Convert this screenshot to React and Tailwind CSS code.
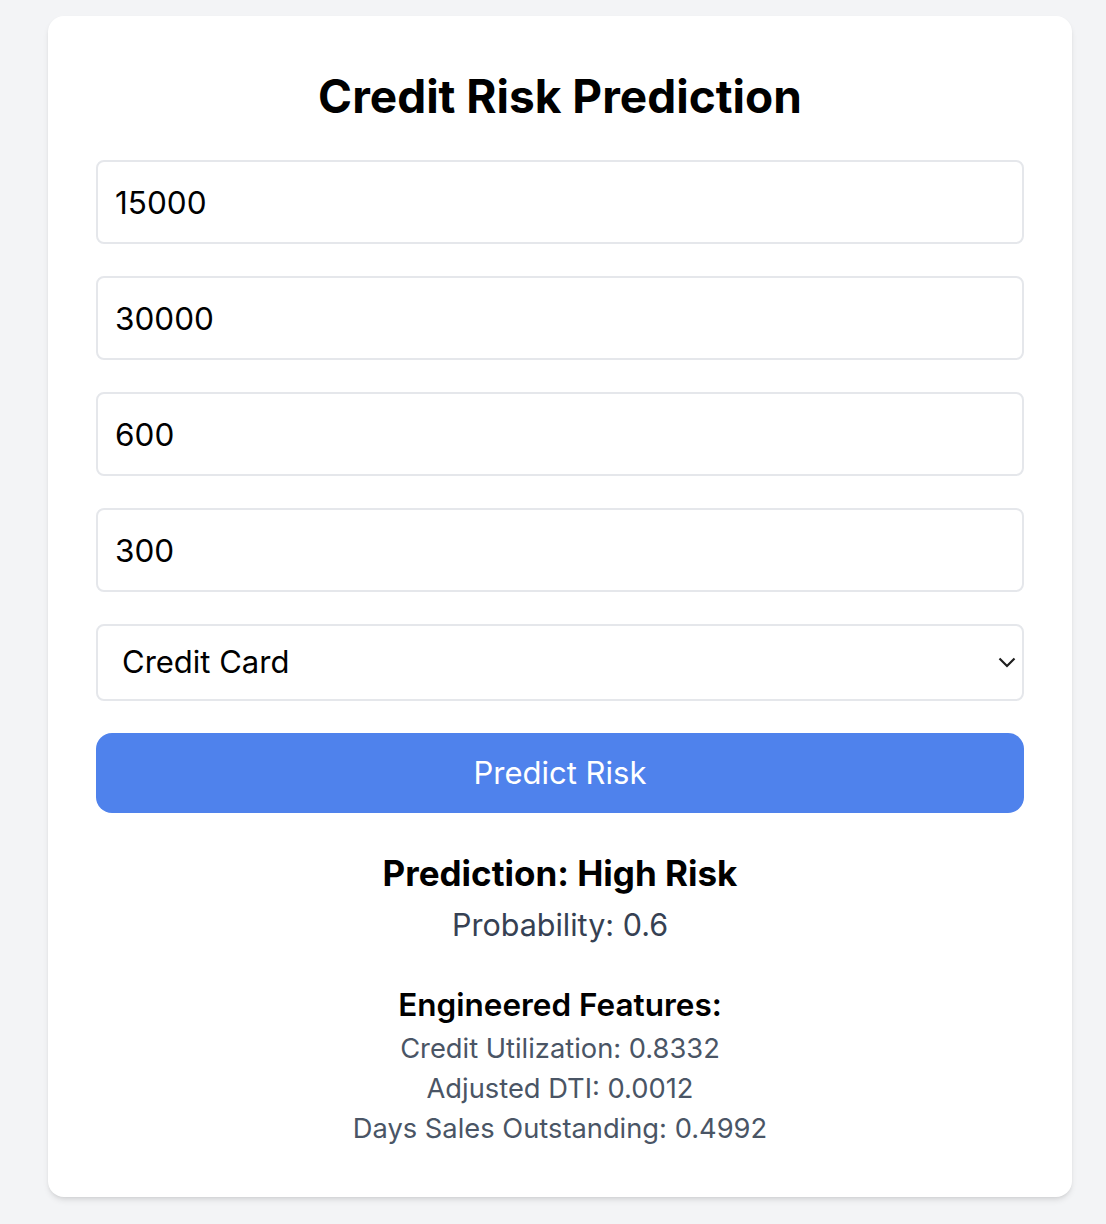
import { useState } from 'react';

export default function App() {
  const [values, setValues] = useState(['15000', '30000', '600', '300']);
  const [loanType, setLoanType] = useState('Credit Card');

  const features = [
    ['Credit Utilization', '0.8332'],
    ['Adjusted DTI', '0.0012'],
    ['Days Sales Outstanding', '0.4992'],
  ];

  return (
    <div className="min-h-screen bg-gray-100 pt-[16px] font-['Inter',sans-serif]">
      <div className="ml-[48px] w-[1024px] rounded-[16px] bg-white p-[48px] shadow-md">
        <h1 className="mb-[32px] text-center text-[46px] font-bold leading-[64px] text-black">
          Credit Risk Prediction
        </h1>

        {values.map((v, i) => (
          <input
            key={i}
            type="text"
            value={v}
            onChange={(e) => {
              const next = [...values];
              next[i] = e.target.value;
              setValues(next);
            }}
            className="mb-[32px] block h-[84px] w-full rounded-[8px] border-2 border-gray-200 px-[17px] text-[31.5px] text-black outline-none"
          />
        ))}

        <div className="relative mb-[32px]">
          <select
            value={loanType}
            onChange={(e) => setLoanType(e.target.value)}
            className="block h-[77px] w-full appearance-none rounded-[8px] border-2 border-gray-200 bg-white pl-[24px] text-[31px] text-black outline-none"
          >
            <option>Credit Card</option>
            <option>Personal Loan</option>
            <option>Mortgage</option>
          </select>
          <svg
            className="pointer-events-none absolute right-[8px] top-[33px]"
            width="18"
            height="11"
            viewBox="0 0 18 11"
            fill="none"
          >
            <path d="M1.5 1.5 L9 9 L16.5 1.5" stroke="#1f1f1f" strokeWidth="2.2" />
          </svg>
        </div>

        <button className="block h-[80px] w-full rounded-[16px] bg-[#4f82ec] text-[31px] text-white">
          Predict Risk
        </button>

        <div className="mt-[32px] text-center">
          <h2 className="text-[35px] font-bold leading-[56px] text-black">Prediction: High Risk</h2>
          <p className="text-[30.5px] leading-[48px] text-gray-700">Probability: 0.6</p>

          <div className="mt-[32px]">
            <h3 className="text-[31.5px] font-semibold leading-[48px] text-black">Engineered Features:</h3>
            {features.map(([label, val]) => (
              <p key={label} className="text-[27.3px] leading-[40px] text-gray-600">
                {label}: {val}
              </p>
            ))}
          </div>
        </div>
      </div>
    </div>
  );
}
